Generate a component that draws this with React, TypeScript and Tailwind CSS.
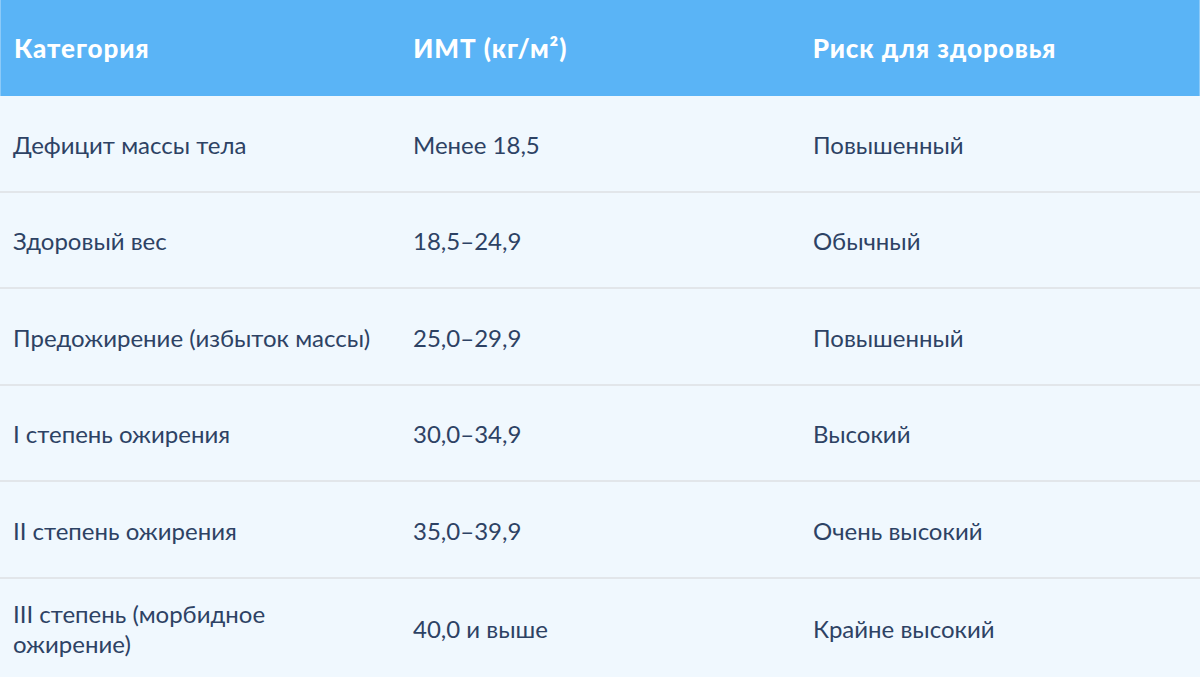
import React from "react";

const rows: [string, string, string][] = [
  ["Дефицит массы тела", "Менее 18,5", "Повышенный"],
  ["Здоровый вес", "18,5–24,9", "Обычный"],
  ["Предожирение (избыток массы)", "25,0–29,9", "Повышенный"],
  ["I степень ожирения", "30,0–34,9", "Высокий"],
  ["II степень ожирения", "35,0–39,9", "Очень высокий"],
  ["III степень (морбидное ожирение)", "40,0 и выше", "Крайне высокий"],
];

export default function App() {
  return (
    <div
      className="w-[1200px] h-[677px] overflow-hidden bg-[#f0f8fe] flex flex-col"
      style={{ fontFamily: "Lato, 'Noto Sans', sans-serif" }}
    >
      <div className="h-[96px] shrink-0 bg-[#5ab4f6] grid grid-cols-3 items-center text-white font-black text-[26px] tracking-[0.9px] border-l border-r border-[#8ccaf8]">
        <div className="pl-[13px]">Категория</div>
        <div className="pl-[13px]">ИМТ (кг/м²)</div>
        <div className="pl-[13px]">Риск для здоровья</div>
      </div>
      {rows.map((r, i) => (
        <div
          key={i}
          className={`grid grid-cols-3 items-center text-[24px] text-[#2d4264] leading-[30px] pt-[3px] ${
            i < rows.length - 1 ? "h-[96.5px] border-b-2 border-[#e2e6ea]" : "flex-1"
          }`}
        >
          <div className={`pl-[13px] ${i === rows.length - 1 ? "pr-[120px]" : ""}`}>{r[0]}</div>
          <div className="pl-[13px]">{r[1]}</div>
          <div className="pl-[13px]">{r[2]}</div>
        </div>
      ))}
    </div>
  );
}
